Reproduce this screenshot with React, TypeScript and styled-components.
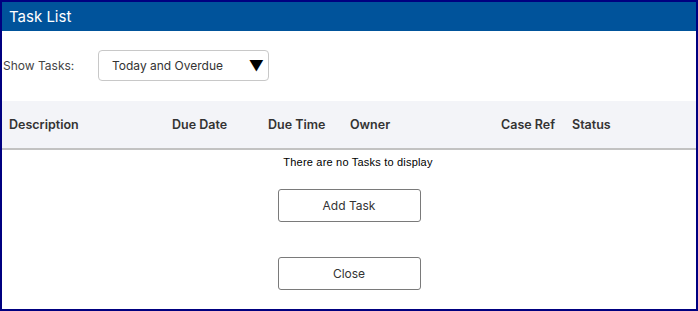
import React from 'react';
import styled, { createGlobalStyle } from 'styled-components';

const GlobalStyle = createGlobalStyle`
  html, body {
    margin: 0;
    padding: 0;
    background: #ffffff;
  }
  * {
    box-sizing: border-box;
  }
`;

const Dialog = styled.div`
  width: 698px;
  height: 311px;
  border: 2px solid #000080;
  display: flex;
  flex-direction: column;
  font-family: Inter, "Noto Sans", sans-serif;
  color: #333;
  background: #fff;
`;

const TitleBar = styled.div`
  height: 29px;
  background: #00539b;
  color: #fff;
  font-size: 15px;
  padding-left: 7px;
  display: flex;
  align-items: center;
`;

const FilterRow = styled.div`
  display: flex;
  align-items: center;
  height: 70px;
  padding: 0 0 2px 1px;
`;

const FilterLabel = styled.label`
  width: 95px;
  font-size: 12px;
  color: #444;
`;

const SelectBox = styled.div`
  width: 171px;
  height: 31px;
  border: 1px solid #c8c8c8;
  border-radius: 4px;
  display: flex;
  align-items: center;
  justify-content: space-between;
  padding: 0 4px 0 13px;
  font-size: 12px;
  color: #333;
`;

const Arrow = styled.span`
  font-size: 15px;
  color: #000;
  line-height: 1;
`;

const HeaderRow = styled.div`
  height: 49px;
  background: #f3f4f8;
  border-bottom: 2px solid #c2c2c2;
  display: grid;
  grid-template-columns: 163px 96px 82px 151px 71px 1fr;
  align-items: center;
  padding-left: 7px;
`;

const HeaderCell = styled.div`
  font-size: 12.5px;
  font-weight: 600;
  color: #333;
`;

const EmptyMessage = styled.div`
  font-family: "Liberation Sans", Arial, sans-serif;
  font-size: 11px;
  letter-spacing: 0.2px;
  color: #000;
  text-align: center;
  padding: 6px 0 0 18px;
  height: 39px;
`;

const Actions = styled.div`
  display: flex;
  flex-direction: column;
  align-items: center;
  gap: 35px;
`;

const Button = styled.button`
  width: 143px;
  height: 33px;
  background: #fff;
  border: 1px solid #7a7a7a;
  border-radius: 3px;
  font-family: Inter, "Noto Sans", sans-serif;
  font-size: 12px;
  color: #333;
  cursor: pointer;
`;

const columns = ['Description', 'Due Date', 'Due Time', 'Owner', 'Case Ref', 'Status'];

export default function App() {
  return (
    <>
      <GlobalStyle />
      <Dialog>
        <TitleBar>Task List</TitleBar>
        <FilterRow>
          <FilterLabel>Show Tasks:</FilterLabel>
          <SelectBox>
            <span>Today and Overdue</span>
            <Arrow>▼</Arrow>
          </SelectBox>
        </FilterRow>
        <HeaderRow>
          {columns.map((c) => (
            <HeaderCell key={c}>{c}</HeaderCell>
          ))}
        </HeaderRow>
        <EmptyMessage>There are no Tasks to display</EmptyMessage>
        <Actions>
          <Button>Add Task</Button>
          <Button>Close</Button>
        </Actions>
      </Dialog>
    </>
  );
}
